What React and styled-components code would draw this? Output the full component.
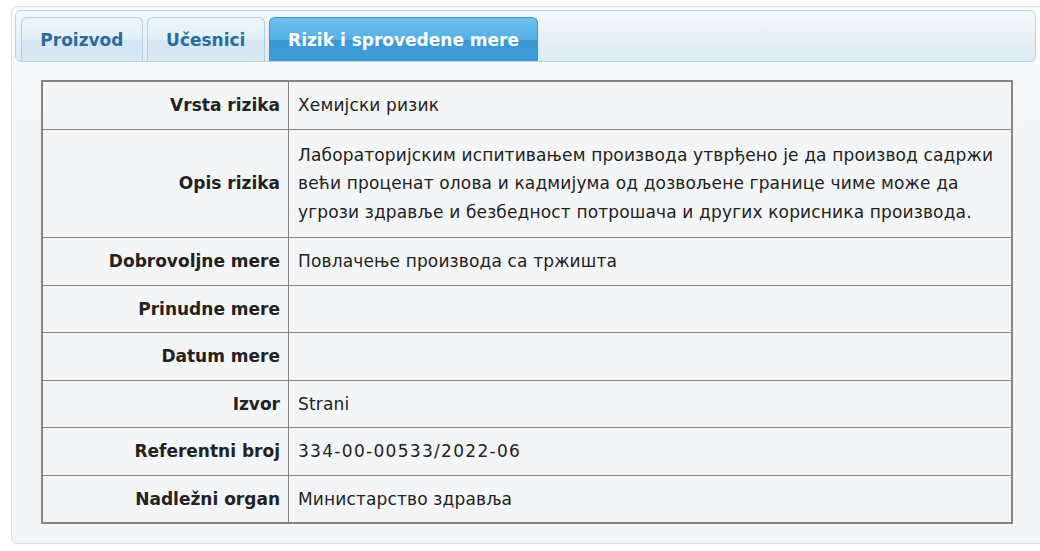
import React from 'react';
import styled, { createGlobalStyle } from 'styled-components';

const GlobalStyle = createGlobalStyle`
  html, body {
    margin: 0;
    padding: 0;
    background: #ffffff;
    font-family: "DejaVu Sans", Verdana, sans-serif;
  }
`;

const rows = [
  { label: 'Vrsta rizika', value: 'Хемијски ризик' },
  {
    label: 'Opis rizika',
    value:
      'Лабораторијским испитивањем производа утврђено је да производ садржи већи проценат олова и кадмијума од дозвољене границе чиме може да угрози здравље и безбедност потрошача и других корисника производа.',
    tall: true,
  },
  { label: 'Dobrovoljne mere', value: 'Повлачење производа са тржишта' },
  { label: 'Prinudne mere', value: '' },
  { label: 'Datum mere', value: '' },
  { label: 'Izvor', value: 'Strani' },
  { label: 'Referentni broj', value: '334-00-00533/2022-06', wide: true },
  { label: 'Nadležni organ', value: 'Министарство здравља' },
];

const tabs = ['Proizvod', 'Učesnici', 'Rizik i sprovedene mere'];

const App = () => {
  return (
    <>
      <GlobalStyle />
      <Page>
        <Panel>
          <TabBar>
            {tabs.map((t, i) => (
              <Tab key={t} active={i === 2}>
                {t}
              </Tab>
            ))}
          </TabBar>
          <Body>
            <Table>
              <tbody>
                {rows.map((r) => (
                  <tr key={r.label}>
                    <LabelCell tall={r.tall}>{r.label}</LabelCell>
                    <ValueCell tall={r.tall} wide={r.wide}>
                      {r.value}
                    </ValueCell>
                  </tr>
                ))}
              </tbody>
            </Table>
          </Body>
        </Panel>
      </Page>
    </>
  );
};

const Page = styled.div`
  padding: 6px 0 0 11px;
  width: 1040px;
  box-sizing: border-box;
  overflow: hidden;
  height: 551px;
`;

const Panel = styled.div`
  width: 1040px;
  border: 1px solid #dcdfe3;
  border-radius: 6px;
  background: linear-gradient(#fbfcfd, #f4f5f7 120px, #f4f5f7);
  padding: 3px 0 0 3px;
  box-sizing: border-box;
  height: 538px;
`;

const TabBar = styled.div`
  display: flex;
  align-items: flex-end;
  gap: 4px;
  width: 1021px;
  height: 52px;
  box-sizing: border-box;
  padding: 0 0 0 5px;
  border: 1px solid #b9d3e6;
  border-radius: 6px;
  background: linear-gradient(#f4f8fb, #dbeaf4);
  overflow: hidden;
`;

const Tab = styled.div`
  height: 44px;
  box-sizing: border-box;
  padding: 0 18.3px;
  display: flex;
  align-items: center;
  font-weight: bold;
  font-size: 17px;
  border: 1px solid ${(p) => (p.active ? '#3a94cf' : '#b6cfe2')};
  border-bottom: none;
  border-radius: 6px 6px 0 0;
  color: ${(p) => (p.active ? '#ffffff' : '#2b6c9c')};
  background: ${(p) =>
    p.active
      ? 'linear-gradient(#6ec0ec 0%, #54b0e4 50%, #3b9ad6 52%, #3e9dd8 100%)'
      : 'linear-gradient(#edf5fb 0%, #e2eef7 50%, #d4e6f2 52%, #d9e9f4 100%)'};
`;

const Body = styled.div`
  padding: 18px 0 0 26px;
`;

const Table = styled.table`
  width: 972px;
  border-collapse: collapse;
  border: 2px solid #858585;
  font-size: 17px;
  color: #222;
  line-height: 28.5px;
  background: #f4f5f7;
`;

const LabelCell = styled.td`
  width: 229px;
  text-align: right;
  font-weight: bold;
  padding: ${(p) => (p.tall ? '11px 8px' : '9px 8px')};
  border: 1px solid #858585;
  vertical-align: middle;
  color: #222;
`;

const ValueCell = styled.td`
  padding: ${(p) => (p.tall ? '11px 8px 11px 9px' : '9px 8px 9px 9px')};
  border: 1px solid #858585;
  vertical-align: middle;
  height: 28.5px;
  letter-spacing: ${(p) => (p.wide ? '1.3px' : '0.15px')};
`;

export default App;
